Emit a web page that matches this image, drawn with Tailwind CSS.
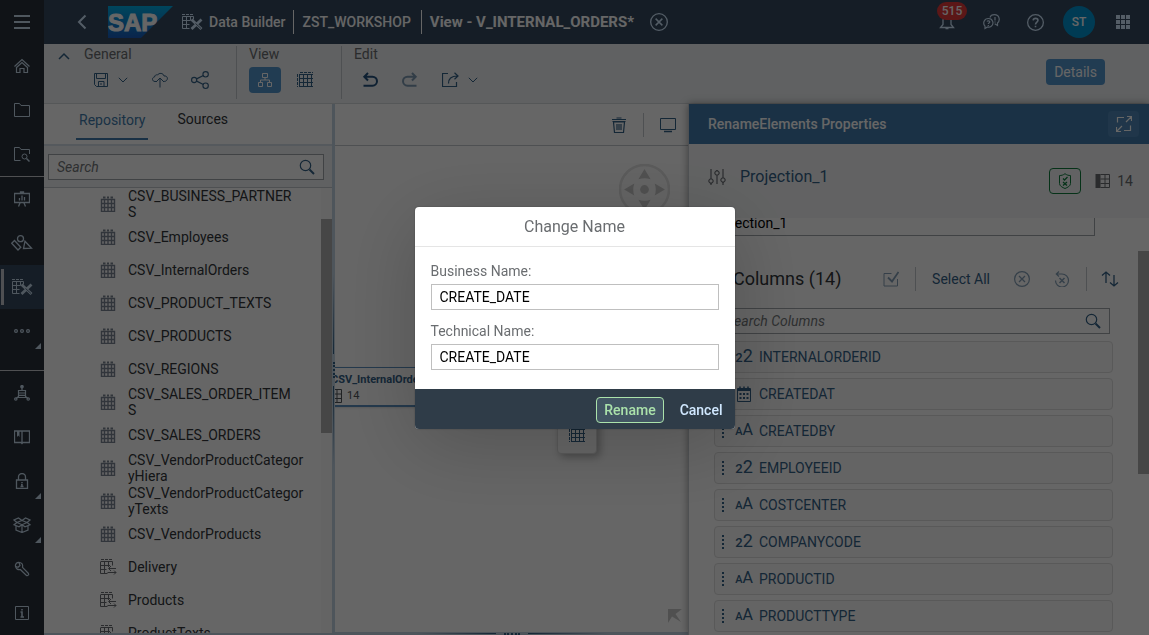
<!DOCTYPE html>
<html lang="en">
<head>
<meta charset="utf-8">
<title>Data Builder - V_INTERNAL_ORDERS</title>
<script src="https://cdn.jsdelivr.net/npm/@tailwindcss/browser@4"></script>
</head>
<body class="h-screen overflow-hidden bg-white font-['Roboto','Liberation_Sans',sans-serif] text-sm leading-4 text-[#32363a]">

<svg class="hidden" aria-hidden="true">
  <symbol id="i-menu" viewBox="0 0 16 16"><path d="M0 2h16M0 8h16M0 14h16" stroke="currentColor" stroke-width="2"/></symbol>
  <symbol id="i-home" viewBox="0 0 16 16" fill="none" stroke="currentColor" stroke-width="1.200"><path d="M.5 8.500 8 1.500l7.500 7M2.500 9.500 8 4.500l5.500 5M2.500 9v5.500h3.500V10.500h4v4h3.500V9"/></symbol>
  <symbol id="i-folder" viewBox="0 0 16 16" fill="none" stroke="currentColor"><path d="M.5 14.500V1.500h5l1.500 2h8.500v11z"/></symbol>
  <symbol id="i-foldersearch" viewBox="0 0 16 16" fill="none" stroke="currentColor"><path d="M6.500 14.500h-6V1.500h5l1.500 2h8.500V8"/><circle cx="10.500" cy="10.500" r="2.500"/><path d="m12.500 12.500 3 3" stroke-width="1.500"/></symbol>
  <symbol id="i-easel" viewBox="0 0 16 16" fill="none" stroke="currentColor"><path d="M.5 2.500h15v9H.5zM6.500 2.500V1h3v1.500M6 12l-1.500 3.500M10 12l1.500 3.500M5.500 9.500V7M8 9.500V4.500M10.500 9.500V6" stroke-width="1.300"/></symbol>
  <symbol id="i-shapes" viewBox="0 0 22 16" fill="none" stroke="currentColor" stroke-width="1.300"><circle cx="9.500" cy="3.700" r="3"/><path d="m3.500 5.500-2.800 2.800 6.300 6.700 2.800-2.800zM14 6.200 20.500 13.200l-8 .3z"/></symbol>
  <symbol id="i-builder" viewBox="0 0 22 16" fill="none" stroke="currentColor"><path d="M1 .5h12" stroke-dasharray="3 1"/><path d="M1.500 2.500h11M1.500 6.500h8M1.500 10.500h7M1.500 14.500h7M1.500 2.500v12M5.500 2.500v12M9.500 2.500v4M12.500 2.500v3"/><path d="m10.500 5.500 10 9.500M20.500 5.500l-10 9.500" stroke-width="2.800"/><path d="m14.500 9.500 5.500 5" stroke="#354a5f" stroke-width=".8"/></symbol>
  <symbol id="i-more" viewBox="0 0 16 16" fill="none" stroke="currentColor" stroke-width="1.200"><circle cx="2" cy="8" r="1.400"/><circle cx="8" cy="8" r="1.400"/><circle cx="14" cy="8" r="1.400"/></symbol>
  <symbol id="i-network" viewBox="0 0 16 16" fill="none" stroke="currentColor" stroke-width="1.200"><circle cx="8" cy="1.700" r="1.200" fill="currentColor"/><path d="M8 3v2M4.500 5.500h7v7h-7zM4.500 8h7M4.500 10.300h7M4.500 11.500 2 13.500M11.500 11.500l2.500 2"/><circle cx="1.800" cy="14" r="1.200"/><circle cx="14.200" cy="14" r="1.200"/></symbol>
  <symbol id="i-book" viewBox="0 0 16 16" fill="none" stroke="currentColor"><path d="M.5 2h15v11.500H9L8 14.500 7 13.500H.5zM8 2v12" stroke-width="1.300"/><path d="M3 2h2.500v6L4.300 6.500 3 8z" fill="currentColor" stroke="none"/></symbol>
  <symbol id="i-lock" viewBox="0 0 16 16" fill="none" stroke="currentColor" stroke-width="1.300"><path d="M2.500 7h11v8.500h-11zM4.500 7V4a3.500 3.500 0 0 1 7 0v3"/><path d="M8 9v1M7 11.500h1v2M6.500 13.500h3" stroke-width="1.500"/></symbol>
  <symbol id="i-box" viewBox="0 0 18 16" fill="none" stroke="currentColor" stroke-width="1.200"><path d="m9 3.500 5 2-5 2.200-5-2.200zM4 5.500 1 7.800l5 2 3-2.100 3 2.100 5-2-3-2.300 3-2.500-4.500-2L9 3.500 5.500 1 1 3zM3 9v4l6 2.500 6-2.500V9M9 7.700v7.800"/></symbol>
  <symbol id="i-wrench" viewBox="0 0 16 16" fill="none" stroke="currentColor" stroke-width="1.200"><path d="M1.500 5.500C1 3 3 .8 5.800 1.500 8 2 9 4 8.500 6.300l6 6.200c.8 1-.9 2.800-2 2L6.300 8.500C4 9 2 8 1.500 5.500L4 6.300 6 4.500 5 1.500"/></symbol>
  <symbol id="i-info" viewBox="0 0 16 16" fill="none" stroke="currentColor"><path d="M1.500 1.500h13v13h-13z"/><path d="M8 4v1.500M6.500 7H8v5M6.500 12h3.500" stroke-width="1.600"/></symbol>
  <symbol id="i-save" viewBox="0 0 16 16" fill="none" stroke="currentColor"><path d="M1.500 1.500h13v13h-11l-2-2zM3.500 1.500v5h9v-5M5.500 14.500v-5h5.500v5M8 11v2"/></symbol>
  <symbol id="i-cloud" viewBox="0 0 18 16" fill="none" stroke="currentColor"><path d="M6 9.500H4C1 9.500.5 5.500 3.500 5 4 3 5 2.500 6.500 3 8 .5 12.500 1 13 4c3-.5 4.500 2.500 2.500 4.500-.7.800-1.500 1-3.500 1M9 15.500V6.500M6 9l3-3 3 3"/></symbol>
  <symbol id="i-share" viewBox="0 0 16 16" fill="none" stroke="currentColor"><circle cx="2.800" cy="8" r="2.300"/><circle cx="13" cy="2.900" r="2.400"/><circle cx="13" cy="13.100" r="2.400"/><path d="m5 7 6-3M5 9l6 3"/></symbol>
  <symbol id="i-tree" viewBox="0 0 16 16" fill="none" stroke="currentColor"><path d="M5.500 1.500h5v4h-5zM1.500 10.500h4v4h-4zM10.500 10.500h4v4h-4zM8 5.500V8M3.500 10.500V8h9v2.500"/></symbol>
  <symbol id="i-table" viewBox="0 0 16 16" fill="none" stroke="currentColor"><path d="M2.500 2v13M6.500 2v13M10.500 2v13M14.500 2v13M3 2.500h13M2 6.500h14M2 10.500h14M2 14.500h14"/><path d="M.5 2v13M3 .5h13" stroke-dasharray="3 1"/></symbol>
  <symbol id="i-dbtable" viewBox="0 0 16 16" fill="none" stroke="currentColor"><path d="M1.500 3.500h13v12h-13zM4.500 3v12M8 3v12M11.500 3v12M1.500 7.500h13M1.500 11.500h13" stroke-width="1.400"/><path d="M3 1.500h2.500M7 1.500h2M10.500 1.500H13" stroke-width="2"/></symbol>
  <symbol id="i-view" viewBox="0 0 17 16" fill="none" stroke="currentColor"><path d="M1 .5h12" stroke-dasharray="3 1"/><path d="M.5 3v11.500h7M.5 2.500h12v4M4.500 3v11.500M8.500 3v5M.5 6.500H10M.5 10.500h6M16 9.500H9M11 7l-2.500 2.500L11 12M7.500 13.500H16M14 11.500l2 2-2 2"/></symbol>
  <symbol id="i-undo" viewBox="0 0 16 16" fill="none" stroke="currentColor" stroke-width="2"><path d="M6 1 2.300 4.700 6 8.500M2.300 4.700h8.200a4.500 4.500 0 0 1 0 9H1.500"/></symbol>
  <symbol id="i-export" viewBox="0 0 18 16" fill="none" stroke="currentColor"><path d="M6 1.500H.5v13h14V10M6.500 11.500C6.500 7 9 4 15.500 4M12.500.8 16 4l-3.500 3.200" stroke-width="1.200"/></symbol>
  <symbol id="i-down" viewBox="0 0 10 6" fill="none" stroke="currentColor"><path d="m.8.800 4.200 4.200L9.200.8"/></symbol>
  <symbol id="i-search" viewBox="0 0 16 16" fill="none" stroke="currentColor" stroke-width="1.200"><circle cx="6.500" cy="6.500" r="5.200"/><path d="m10.500 10.500 4.500 4.500" stroke-width="2"/></symbol>
  <symbol id="i-closec" viewBox="0 0 16 16" fill="none" stroke="currentColor"><circle cx="8" cy="8" r="7.400" stroke-width="1.200"/><path d="m5 5 6 6M11 5l-6 6" stroke-width="1.300"/></symbol>
  <symbol id="i-bell" viewBox="0 0 16 16" fill="none" stroke="currentColor" stroke-width="1.300"><path d="M1.500 13.500h13l-2.500-3V6a4 4 0 0 0-8 0v4.500zM6.500 14.500h3"/></symbol>
  <symbol id="i-chat" viewBox="0 0 17 16" fill="none" stroke="currentColor" stroke-width="1.200"><path d="M2 14.500v-2.300C-.5 9.500 1 4.500 5.500 4.500s6 5.500 2.500 8c-1 .7-2.500.8-3.500.5zM7 3.500C7.500 1.500 9 .6 11.500.6c5 0 6 6 3 8.400v2.500l-2.800-1.700"/><path d="M4 7.500c.5-1 2.800-1 2.800.3S5.300 9 5.300 10M5.300 11v1M12 3v3.500M12 7.500v1"/></symbol>
  <symbol id="i-help" viewBox="0 0 16 16" fill="none" stroke="currentColor" stroke-width="1.200"><circle cx="8" cy="8" r="7.400"/><path d="M5.800 6C6 3.500 10.300 3.500 10.300 6 10.300 7.500 8 7.800 8 9.800M8 11v1.500" stroke-width="1.500"/></symbol>
  <symbol id="i-grid" viewBox="0 0 16 16" fill="currentColor"><path d="M1 1h4v4H1zM6 1h4v4H6zM11 1h4v4h-4zM1 6h4v4H1zM6 6h4v4H6zM11 6h4v4h-4zM1 11h4v4H1zM6 11h4v4H6zM11 11h4v4h-4z"/></symbol>
  <symbol id="i-trash" viewBox="0 0 16 16" fill="none" stroke="currentColor" stroke-width="1.200"><path d="M1 2.500h14M5.500 1h5M2.500 5l1 10.500h9l1-10.500zM1.500 4.500h13M6 7v6M8 7v6M10 7v6"/></symbol>
  <symbol id="i-monitor" viewBox="0 0 16 16" fill="none" stroke="currentColor"><path d="M.5 1.500h15v11H.5z"/><path d="M4 14.500h8" stroke-width="1.500"/></symbol>
  <symbol id="i-sliders" viewBox="0 0 18 16" fill="none" stroke="currentColor"><path d="M3 0v9.500M3 14v2M9 1v1M9 6.500V15M15 0v8.500M15 13v3"/><circle cx="3" cy="12" r="2.200"/><circle cx="9" cy="4" r="2.200"/><circle cx="15" cy="11" r="2.200"/></symbol>
  <symbol id="i-expand" viewBox="0 0 16 16" fill="none" stroke="currentColor"><path d="M1.500 6.500v-5H8M14.500 9.500v5H8M10 6l5.500-5.500M11 .5h4.500V5M6 10 .5 15.500M.5 11v4.500H5" stroke-width="1.200"/></symbol>
  <symbol id="i-shield" viewBox="0 0 16 16" fill="none" stroke="currentColor"><path d="M8 .7C6 2.200 4.500 2.500 2.500 2.500v8c0 2.500 3 4 5.500 5 2.500-1 5.500-2.500 5.500-5v-8C11.500 2.500 10 2.200 8 .7z"/><path d="m6 5.500 1.500 1.500L10.500 4M6 9l4 3.500M10 9l-4 3.500" stroke-width="1.300"/></symbol>
  <symbol id="i-cols" viewBox="0 0 16 16" fill="none" stroke="currentColor"><path d="M.5 1h5v14h-5z" fill="currentColor" stroke="none"/><path d="M5.500 1.500h9v13h-9M10 1.500v13M5.500 6h9M5.500 10.500h9"/></symbol>
  <symbol id="i-check" viewBox="0 0 16 16" fill="none" stroke="currentColor"><path d="M8.500 2.500H1v12.500h13.500V8"/><path d="m5 6.500 4 4 6.500-9.500" stroke-width="1.800"/></symbol>
  <symbol id="i-reset" viewBox="0 0 16 16" fill="none" stroke="currentColor" stroke-width="1.200"><path d="M1.500 9.500A6.500 6.500 0 1 0 8 3H2.500M5 .5 2.300 3 5 5.500"/><path d="m5.500 7 5 5M10.500 7l-5 5" stroke-width="1.500"/></symbol>
  <symbol id="i-sort" viewBox="0 0 18 16" fill="none" stroke="currentColor" stroke-width="1.300"><path d="M5 12V1M1 4.500 5 1l4 3.500M13 4v11M9 11.500 13 15l4-3.500"/></symbol>
  <symbol id="i-date" viewBox="0 0 16 16" fill="none" stroke="currentColor"><path d="M1.500 2.500h13v13h-13z"/><path d="M1 4h14" stroke-width="2"/><path d="M4 .5v2M12 .5v2M8 .5v2" stroke-width="1.500"/><path d="M3.500 8h9M3.500 12h9" stroke-width="2" stroke-dasharray="2 1.500"/></symbol>
</svg>

<div class="flex h-full" id="app">
  <!-- Side navigation -->
  <nav class="flex w-11 shrink-0 flex-col bg-[#29313a] text-[#c5d9ec]" id="side" aria-label="Main"></nav>

  <div class="flex min-w-0 flex-1 flex-col">
    <!-- Shell bar -->
    <header class="flex h-11 shrink-0 items-center bg-[#354a5f] pl-[30px] pr-[18px] text-white">
      <button class="flex w-4 justify-center text-[#d1e8ff]" aria-label="Back"><svg class="h-4 w-3" viewBox="0 0 12 16" fill="none" stroke="currentColor" stroke-width="2"><path d="M9.500 1.500 3 8l6.500 6.500"/></svg></button>
      <svg class="ml-[18px] h-8 w-[65px]" viewBox="0 0 65 32" role="img" aria-label="SAP">
        <defs><linearGradient id="g" x2="0" y2="1"><stop offset="0" stop-color="#00aee8"/><stop offset="1" stop-color="#1a5dbe"/></linearGradient></defs>
        <path d="M0 0h65L33 32H0z" fill="url(#g)"/>
        <text x="0" y="25" fill="#fff" stroke="#fff" stroke-width="1" font-family="Liberation Sans" font-weight="bold" font-size="24">SAP</text>
      </svg>
      <svg class="ml-2 h-4 w-[22px] text-[#d1e8ff]"><use href="#i-builder"/></svg>
      <a href="#" class="ml-1.5 font-medium">Data Builder</a>
      <span class="ml-2 h-6 w-px bg-white"></span>
      <a href="#" class="ml-2 font-medium">ZST_WORKSHOP</a>
      <span class="ml-2.5 h-6 w-px bg-white"></span>
      <h1 class="ml-2 text-[15px] font-bold">View - V_INTERNAL_ORDERS*</h1>
      <button class="ml-4 text-[#d1e8ff]" aria-label="Close view"><svg class="size-[18px]"><use href="#i-closec"/></svg></button>
      <div class="ml-auto flex items-center text-[#d1e8ff]">
        <button class="relative flex w-11 justify-center" aria-label="Notifications"><svg class="size-4"><use href="#i-bell"/></svg><span class="absolute -top-3 left-3 flex h-[18px] w-[30px] items-center justify-center rounded-full bg-[#e33a3a] text-xs font-medium text-white">515</span></button>
        <button class="flex w-11 justify-center" aria-label="Feedback"><svg class="h-4 w-[17px]"><use href="#i-chat"/></svg></button>
        <button class="flex w-11 justify-center" aria-label="Help"><svg class="size-[17px]"><use href="#i-help"/></svg></button>
        <button class="mx-1.5 size-8 rounded-full bg-[#0095d3] text-xs font-medium text-white">ST</button>
        <button class="flex w-[30px] justify-end" aria-label="Products"><svg class="size-4"><use href="#i-grid"/></svg></button>
      </div>
    </header>

    <!-- Toolbar -->
    <div class="flex h-[60px] shrink-0 border-b border-[#d5d9dd] bg-[#eff2f4] pl-2.5 pr-11 pt-0.5 text-[#346187]">
      <button class="flex h-5 w-5 items-center justify-center" aria-label="Collapse toolbar"><svg class="h-2 w-3 rotate-180" viewBox="0 0 12 8" fill="none" stroke="currentColor" stroke-width="1.500"><path d="m1 1 5 5 5-5"/></svg></button>
      <section class="ml-2.5 w-[152px]">
        <h2 class="h-[21px] text-[#6a6d70]">General</h2>
        <div class="flex h-[26px] items-center">
          <button class="flex w-[34px] justify-center" aria-label="Save"><svg class="size-4"><use href="#i-save"/></svg></button>
          <button class="mr-4" aria-label="Save options"><svg class="h-[6px] w-[10px]"><use href="#i-down"/></svg></button>
          <button class="mr-2 flex w-8 justify-center" aria-label="Deploy"><svg class="h-4 w-[18px]"><use href="#i-cloud"/></svg></button>
          <button class="flex w-8 justify-center" aria-label="Share"><svg class="size-[18px]"><use href="#i-share"/></svg></button>
        </div>
      </section>
      <section class="mb-1 w-[105px] border-l border-[#c4c9ce] pl-3">
        <h2 class="h-[21px] text-[#6a6d70]">View</h2>
        <div class="flex h-[26px] items-center gap-2">
          <button class="flex h-[26px] w-8 items-center justify-center rounded-sm bg-[#5496cd] text-white" aria-label="Diagram"><svg class="size-4"><use href="#i-tree"/></svg></button>
          <button class="flex w-8 justify-center" aria-label="Table"><svg class="size-4"><use href="#i-table"/></svg></button>
        </div>
      </section>
      <section class="mb-1 border-l border-[#c4c9ce] pl-3">
        <h2 class="h-[21px] text-[#6a6d70]">Edit</h2>
        <div class="flex h-[26px] items-center">
          <button class="mr-2 flex w-8 justify-center text-[#24527d]" aria-label="Undo"><svg class="size-4"><use href="#i-undo"/></svg></button>
          <button class="mr-2 flex w-8 justify-center opacity-60" aria-label="Redo"><svg class="size-4 -scale-x-100"><use href="#i-undo"/></svg></button>
          <button class="flex w-[34px] justify-center" aria-label="Export"><svg class="h-4 w-[18px]"><use href="#i-export"/></svg></button>
          <button aria-label="Export options"><svg class="h-[6px] w-[10px]"><use href="#i-down"/></svg></button>
        </div>
      </section>
      <button class="ml-auto mt-[13px] h-[26px] rounded-sm bg-[#5496cd] px-2 text-white">Details</button>
    </div>

    <main class="flex min-h-0 flex-1">
      <!-- Repository browser -->
      <aside class="flex w-72 shrink-0 flex-col bg-white">
        <div class="flex h-[42px] shrink-0 items-start gap-[29px] border-b-2 border-[#d5dfe9] pl-8 pt-[7px]">
          <button class="h-[29px] border-b-2 border-[#427cac] px-[3px] pb-2.5 text-[#427cac]">Repository</button>
          <button class="h-[29px] pb-[13px]">Sources</button>
        </div>
        <div class="shrink-0 border-b border-[#c4c9ce] bg-[#eff2f4] px-1 pb-[7px] pr-2 pt-2">
          <label class="flex h-[26px] items-center border border-[#a0a5aa] bg-white px-2 text-[#346187]"><input type="search" placeholder="Search" aria-label="Search repository" class="w-full flex-1 italic placeholder:text-[#74777a]"><svg class="size-4 shrink-0"><use href="#i-search"/></svg></label>
        </div>
        <div class="flex min-h-0 flex-1 border-b-2 border-[#c4d4e4]">
          <div class="flex-1 overflow-hidden"><ul class="-mt-px" id="repo"></ul></div>
          <div class="w-[11px] bg-[#f9f9f9] pt-[31px]"><div class="h-[214px] bg-[#b0b0b0]"></div></div>
        </div>
      </aside>
      <div class="flex w-[3px] shrink-0 flex-col items-center justify-center gap-2 bg-[#c4d4e4]">
        <span class="h-20 w-px bg-linear-to-b from-transparent to-[#346187]"></span>
        <span class="h-4 w-0.5 border-l-2 border-dotted border-[#346187]"></span>
        <span class="h-20 w-px bg-linear-to-t from-transparent to-[#346187]"></span>
      </div>

      <!-- Diagram canvas -->
      <section class="flex min-w-0 flex-1 flex-col bg-white">
        <div class="flex h-[42px] shrink-0 items-center justify-end border-b border-[#c4c9ce] pr-3 text-[#346187]">
          <button aria-label="Delete"><svg class="size-4"><use href="#i-trash"/></svg></button>
          <span class="mx-4 h-6 w-px bg-[#c4c9ce]"></span>
          <button aria-label="Preview"><svg class="size-4"><use href="#i-monitor"/></svg></button>
        </div>
        <div class="relative flex-1 overflow-hidden">
          <svg class="absolute right-[18px] top-[18px] size-[51px] text-[#c9c9c9]" viewBox="0 0 50 50" fill="currentColor"><circle cx="25" cy="25" r="24" fill="#fafafa" stroke="#e2e2e2" stroke-width="2.500"/><circle cx="25" cy="25" r="4.300"/><path d="m25 5 6 10q-6-2-12 0zM25 45l6-10q-6 2-12 0zM5 25l10-6q-2 6 0 12zM45 25l-10-6q2 6 0 12z"/></svg>
          <div class="absolute -left-2 top-[221px] h-10 w-36 border-b-2 border-t border-[#5b8fbf] bg-white pt-1 shadow">
            <div class="pl-1 text-[11px] font-bold text-[#346187]">CSV_InternalOrders</div>
            <div class="flex items-center gap-1 text-[11px] text-[#51555a]"><svg class="size-4"><use href="#i-cols"/></svg>14</div>
          </div>
          <div class="absolute left-[222px] top-[240px] flex h-[68px] w-10 items-end justify-center rounded border border-[#dedede] bg-white pb-2.5 text-[#346187] shadow-[3px_3px_8px_rgba(0,0,0,0.3)]"><svg class="size-4"><use href="#i-table"/></svg></div>
          <svg class="absolute bottom-[9px] right-1.5 size-[14px] text-[#c9c9c9]" viewBox="0 0 14 14" fill="currentColor"><path d="M0 0h14L7.500 5 13 13 4 7.500 0 14z"/></svg>
        </div>
        <div class="flex h-[3px] shrink-0 items-center justify-center gap-2 bg-[#c4d4e4]">
          <span class="h-px w-20 bg-linear-to-r from-transparent to-[#346187]"></span>
          <span class="w-4 border-t-2 border-dotted border-[#346187]"></span>
          <span class="h-px w-20 bg-linear-to-l from-transparent to-[#346187]"></span>
        </div>
      </section>

      <!-- Properties -->
      <aside class="flex w-[461px] shrink-0 flex-col border-l border-[#c4c9ce] bg-white shadow-[0_0_8px_rgba(0,0,0,0.4)]">
        <div class="flex h-10 shrink-0 items-center justify-between bg-[#427cac] pl-[19px] pr-2.5 text-white">
          <h2 class="font-medium">RenameElements Properties</h2>
          <button class="flex h-[26px] w-[31px] items-center justify-center rounded-sm bg-[#5088b8]" aria-label="Full screen"><svg class="size-4"><use href="#i-expand"/></svg></button>
        </div>
        <div class="flex h-[74px] shrink-0 items-center bg-[#f4f6f8] pl-[19px] pr-4 text-[#6a6d70]">
          <svg class="mb-2 h-4 w-[18px] text-[#51555a]"><use href="#i-sliders"/></svg>
          <h3 class="mb-2 ml-3.5 text-base leading-5 text-[#346187]">Projection_1</h3>
          <button class="ml-auto flex h-[26px] w-8 items-center justify-center rounded-sm border border-[#107e3e] text-[#107e3e]" aria-label="Validation"><svg class="size-4"><use href="#i-shield"/></svg></button>
          <svg class="ml-3.5 size-4"><use href="#i-cols"/></svg><span class="ml-1.5">14</span>
        </div>
        <div class="flex min-h-0 flex-1 overflow-hidden">
          <div class="min-w-0 flex-1">
            <div class="-mt-2 mr-[43px] pl-3"><input aria-label="Business name" value="Projection_1" class="h-[26px] w-full border border-[#a0a5aa] bg-white px-2 text-black"></div>
            <div class="ml-11 mr-[19px] mt-[29px] flex h-7 items-center text-[#346187]">
              <h3 class="text-lg leading-6 text-[#32363a]">Columns (14)</h3>
              <button class="ml-auto opacity-60" aria-label="Validate"><svg class="size-4"><use href="#i-check"/></svg></button>
              <span class="mx-4 h-6 w-px bg-[#c4c9ce]"></span>
              <button>Select All</button>
              <button class="ml-6 opacity-60" aria-label="Exclude"><svg class="size-4"><use href="#i-closec"/></svg></button>
              <button class="ml-6 opacity-60" aria-label="Restore"><svg class="size-4"><use href="#i-reset"/></svg></button>
              <span class="ml-4 mr-3.5 h-6 w-px bg-[#c4c9ce]"></span>
              <button aria-label="Sort"><svg class="h-4 w-[18px]"><use href="#i-sort"/></svg></button>
            </div>
            <label class="ml-7 mr-7 mt-[15px] flex h-[26px] items-center border border-[#a0a5aa] px-2 text-[#346187]"><input type="search" placeholder="Search Columns" aria-label="Search columns" class="w-full flex-1 italic placeholder:text-[#74777a]"><svg class="size-4 shrink-0"><use href="#i-search"/></svg></label>
            <ul class="ml-[25px] mr-[25px] mt-[7px] flex flex-col gap-[5px]" id="cols"></ul>
          </div>
          <div class="w-[11px] pt-[33px]"><div class="h-[223px] bg-[#b0b0b0]"></div></div>
        </div>
      </aside>
    </main>
  </div>
</div>

<!-- Modal -->
<div class="fixed inset-0 flex items-center justify-center bg-black/60">
  <form class="w-80 overflow-hidden rounded bg-white text-[#6a6d70] shadow-[0_0_2px_rgba(0,0,0,0.3),0_16px_80px_rgba(0,0,0,0.2)]" role="dialog" aria-labelledby="dlg">
    <h2 id="dlg" class="h-10 border-b border-[#e5e5e5] text-center text-base leading-10">Change Name</h2>
    <div class="px-4 pb-[19px] pt-3.5">
      <label for="bn" class="block leading-5">Business Name:</label>
      <input id="bn" value="CREATE_DATE" class="mt-[3px] block h-[26px] w-full border border-[#bfbfbf] px-2 text-black">
      <label for="tn" class="mt-[11px] block leading-5">Technical Name:</label>
      <input id="tn" value="CREATE_DATE" class="mt-[3px] block h-[26px] w-full border border-[#bfbfbf] px-2 text-black">
    </div>
    <div class="flex h-10 items-center justify-end gap-2 bg-[#2f3c48] pr-1 pt-0.5 font-medium">
      <button type="button" class="h-[26px] rounded-sm border border-[#abe2ab] bg-[#425563] px-[7px] text-[#abe2ab]">Rename</button>
      <button type="button" class="h-[26px] px-2 text-[#d1e8ff]">Cancel</button>
    </div>
  </form>
</div>

<script>
const nav = [['menu','Menu'],['home','Home'],['folder','Spaces'],['foldersearch','Repository'],['-'],['easel','Stories'],['shapes','Business Builder'],['builder','Data Builder','sel'],['more','More','tri'],['--'],['network','Connections'],['book','Catalog'],['lock','Security','tri'],['box','Transport','tri'],['wrench','System'],['info','About']];
const sizes = {shapes:'h-4 w-[22px]', builder:'h-4 w-[22px]', box:'h-4 w-[18px]', menu:'h-4 w-4'};
document.getElementById('side').innerHTML = nav.map(([i,n,f]) =>
  i === '-' ? '<span class="h-px shrink-0 bg-[#c5c9cd]"></span>' :
  i === '--' ? '<span class="mt-[17px] h-px shrink-0 bg-[#c5c9cd]"></span>' :
  `<button aria-label="${n}" class="relative flex h-11 shrink-0 items-center justify-center ${f === 'sel' ? 'bg-[#354a5f]' : ''}">
    ${f === 'sel' ? '<span class="absolute inset-y-1 left-px w-[3px] bg-[#c5c9d0]"></span>' : ''}
    <svg class="${sizes[i] || 'size-4'}"><use href="#i-${i}"/></svg>
    ${f === 'tri' ? '<svg class="absolute bottom-1 right-[3px] size-[6px]" viewBox="0 0 6 6" fill="currentColor"><path d="M6 0v6H0z"/></svg>' : ''}
  </button>`).join('');

const repo = ['CSV_BUSINESS_PARTNER<br>S','CSV_Employees','CSV_InternalOrders','CSV_PRODUCT_TEXTS','CSV_PRODUCTS','CSV_REGIONS','CSV_SALES_ORDER_ITEM<br>S','CSV_SALES_ORDERS','CSV_VendorProductCategor<br>yHiera','CSV_VendorProductCategor<br>yTexts','CSV_VendorProducts','Delivery','Products','ProductTexts'];
document.getElementById('repo').innerHTML = repo.map(t =>
  `<li class="flex h-[33px] items-center pl-14">${t.startsWith('CSV') ? '<svg class="size-4 text-[#7c8594]"><use href="#i-dbtable"/></svg>' : '<svg class="h-4 w-[17px] -mr-px text-[#6a6d70]"><use href="#i-view"/></svg>'}<span class="ml-3">${t}</span></li>`).join('');

const cols = [['n','INTERNALORDERID'],['d','CREATEDAT'],['s','CREATEDBY'],['n','EMPLOYEEID'],['s','COSTCENTER'],['n','COMPANYCODE'],['s','PRODUCTID'],['s','PRODUCTTYPE']];
const kind = {
  n: '<span class="text-[13px] font-medium">2</span><span class="text-lg leading-4">2</span>',
  s: '<span class="text-[11px] font-medium">A</span><span class="text-base leading-4">A</span>',
  d: '<svg class="size-4"><use href="#i-date"/></svg>'
};
document.getElementById('cols').innerHTML = cols.map(([k,t]) =>
  `<li class="flex h-8 items-center rounded-sm border border-[#dedede] bg-[#f9f9f9] pl-[7px] text-[#346187]"><span class="h-[14px] border-l-2 border-dotted border-[#346187]"></span><span class="ml-2 mr-[3px] flex w-6 items-baseline justify-center">${kind[k]}</span>${t}</li>`).join('');
</script>
</body>
</html>
